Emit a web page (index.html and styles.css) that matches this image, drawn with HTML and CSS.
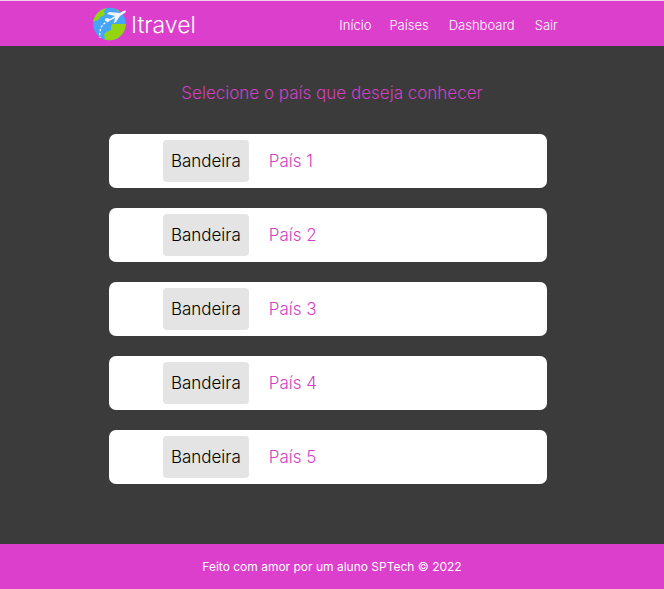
FILE: index.html
```html
<!DOCTYPE html>
<html lang="pt-BR">
<head>
  <meta charset="utf-8">
  <meta name="viewport" content="width=device-width, initial-scale=1">
  <title>Itravel</title>
  <link rel="stylesheet" href="styles.css">
</head>
<body>
  <header class="header">
    <a class="brand" href="#">
      <svg class="brand-icon" viewBox="0 0 34 34" aria-hidden="true">
        <defs><clipPath id="globe"><circle cx="16.5" cy="17" r="16.3"/></clipPath></defs>
        <g clip-path="url(#globe)">
          <path fill="#45a5fb" d="M0 0h34v34H0z"/>
          <path fill="#92d510" d="M0 15V0h13l-1 3-1 2 1 2-2 2-3 1-2 3-3 1z"/>
          <path fill="#92d510" d="M22 0l2 4 10 1V0zM34 17H19l-1 3v3l-5 2-2 3 1 2-1 4h23z"/>
        </g>
        <path fill="none" stroke="#fff" stroke-width="1.2" stroke-dasharray="2.5 1.5" d="M16 14C9 16 6 22 7 31"/>
        <path fill="#f3f3fa" d="M12 12l2-1 3 1 5-3-8-2 2-2 11 1 3-2q3-1 3 0 0 2-3 3l-3 2-4 6-2 1 1-5-6 3-4 0z"/>
      </svg>
      <span class="brand-name">Itravel</span>
    </a>
    <nav class="nav">
      <a href="#">Início</a>
      <a href="#">Países</a>
      <a class="nav-spaced" href="#">Dashboard</a>
      <a class="nav-spaced" href="#">Sair</a>
    </nav>
  </header>
  <main class="main">
    <h1 class="title">Selecione o país que deseja conhecer</h1>
    <ul class="countries">
      <li class="country"><span class="flag">Bandeira</span><a class="name" href="#">País 1</a></li>
      <li class="country"><span class="flag">Bandeira</span><a class="name" href="#">País 2</a></li>
      <li class="country"><span class="flag">Bandeira</span><a class="name" href="#">País 3</a></li>
      <li class="country"><span class="flag">Bandeira</span><a class="name" href="#">País 4</a></li>
      <li class="country"><span class="flag">Bandeira</span><a class="name" href="#">País 5</a></li>
    </ul>
  </main>
  <footer class="footer">Feito com amor por um aluno SPTech © 2022</footer>
</body>
</html>
```
FILE: styles.css
```css
* {
  box-sizing: border-box;
}

body {
  margin: 0;
  min-height: 100vh;
  display: flex;
  flex-direction: column;
  background: #3b3b3b;
  color: #fff;
  font: 350 13px/20px Inter, "Liberation Sans", sans-serif;
}

a {
  color: inherit;
  text-decoration: none;
}

.header {
  display: flex;
  align-items: center;
  justify-content: space-between;
  padding: 6px 16% 5px 14%;
  border-top: 1px solid #f2d0ee;
  background: #dc3fcb;
}

.brand {
  display: flex;
  align-items: center;
  gap: 4px;
  font-size: 23px;
  line-height: 34px;
}

.brand-name {
  padding-top: 2px;
  line-height: 32px;
}

.brand-icon {
  width: 34px;
  height: 34px;
}

.nav {
  display: flex;
  gap: 18px;
  padding-top: 2px;
}

.nav-spaced {
  padding-left: 2px;
}

.main {
  flex: 1;
  padding: 36px 0 60px;
}

.title {
  margin: 0 0 30px;
  color: #d23fc3;
  font-size: 17px;
  font-weight: 350;
  line-height: 22px;
  text-align: center;
}

.countries {
  display: flex;
  flex-direction: column;
  gap: 20px;
  width: 66%;
  margin: 0 0 0 16.4%;
  padding: 0;
  list-style: none;
}

.country {
  display: flex;
  align-items: center;
  gap: 20px;
  padding: 6px 54px;
  border-radius: 7px;
  background: #fff;
  font-size: 17px;
}

.flag {
  padding: 0 8px;
  border-radius: 4px;
  background: #e4e4e4;
  color: #000;
  line-height: 42px;
}

.name {
  color: #d23fc3;
}

.footer {
  padding: 13px 0 12px;
  background: #dc3fcb;
  font-size: 12px;
  font-weight: 400;
  text-align: center;
}
```
